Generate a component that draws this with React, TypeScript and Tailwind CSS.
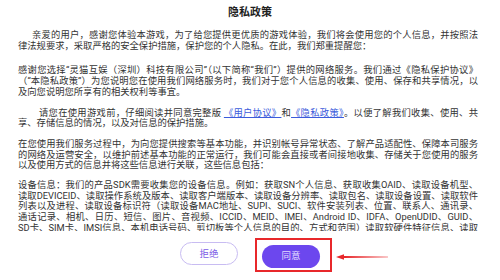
import React from "react";

const Line = ({ children, last, indent }: { children: React.ReactNode; last?: boolean; indent?: string }) => (
  <span
    className={`block ${indent ?? ""} ${last ? "text-left" : "text-justify [text-align-last:justify]"}`}
  >
    {children}
  </span>
);

const Link = ({ children }: { children: React.ReactNode }) => (
  <span className="text-[#3b5bdb] underline underline-offset-[1px]">{children}</span>
);

const App = () => {
  return (
    <div className="w-[500px] h-[280px] bg-white flex flex-col font-[Roboto,'Noto_Sans_CJK_SC',sans-serif] overflow-hidden">
      <h1 className="pt-[6px] text-center text-[11px] leading-[14px] font-bold text-[#1f1f1f]">隐私政策</h1>

      <div className="flex-1 overflow-hidden pl-[18px] pr-[22px] pt-[10px] text-[9.3px] leading-[10.7px] text-[#333]">
        <p>
          <Line indent="pl-[14px]">亲爱的用户，感谢您体验本游戏，为了给您提供更优质的游戏体验，我们将会使用您的个人信息，并按照法</Line>
          <Line last>律法规要求，采取严格的安全保护措施，保护您的个人隐私。在此，我们郑重提醒您：</Line>
        </p>

        <p className="mt-[14px]">
          <Line>感谢您选择“灵猫互娱（深圳）科技有限公司”（以下简称“我们”）提供的网络服务。我们通过《隐私保护协议》</Line>
          <Line>（“本隐私政策”）为您说明您在使用我们网络服务时，我们对于您个人信息的收集、使用、保存和共享情况，以</Line>
          <Line last>及向您说明您所享有的相关权利等事宜。</Line>
        </p>

        <p className="mt-[10px]">
          <Line indent="pl-[21px]">
            请您在使用游戏前，仔细阅读并同意完整版 <Link>《用户协议》</Link>和<Link>《隐私政策》</Link>。以便了解我们收集、使用、共
          </Line>
          <Line last>享、存储信息的情况，以及对信息的保护措施。</Line>
        </p>

        <p className="mt-[10px]">
          <Line>在您使用我们服务过程中，为向您提供搜索等基本功能，并识别帐号异常状态、了解产品适配性、保障本司服务</Line>
          <Line>的网络及运营安全，以维护前述基本功能的正常运行，我们可能会直接或者间接地收集、存储关于您使用的服务</Line>
          <Line last>以及使用方式的信息并将这些信息进行关联，这些信息包括：</Line>
        </p>

        <p className="mt-[9px]">
          <Line>设备信息：我们的产品SDK需要收集您的设备信息。例如：获取SN个人信息、获取收集OAID、读取设备机型、</Line>
          <Line>读取DEVICEID、读取操作系统及版本、读取客户端版本、读取设备分辨率、读取包名、读取设备设置、读取软件</Line>
          <Line>列表以及进程、读取设备标识符（读取设备MAC地址、SUPI、SUCI、软件安装列表、位置、联系人、通讯录、</Line>
          <Line>通话记录、相机、日历、短信、图片、音视频、ICCID、MEID、IMEI、Android ID、IDFA、OpenUDID、GUID、</Line>
          <Line>SD卡、SIM卡、IMSI信息、本机电话号码、剪切板等个人信息的目的、方式和范围）读取软硬件特征信息、读取</Line>
        </p>
      </div>

      <div className="flex justify-center gap-[24px] pt-[11px] pb-[12px]">
        <button className="w-[58px] h-[23px] rounded-full border border-[#c8bcf2] text-[9.5px] text-[#7b5ce6]">
          拒绝
        </button>
        <div className="relative">
          <button className="w-[58px] h-[23px] rounded-full bg-[#6c47ee] text-[9.5px] text-[#e2dbff]">同意</button>
          <span className="absolute left-[-7px] right-[-12px] top-[-4px] bottom-[-4px] border-2 border-[#e8282b]" />
          <svg className="absolute left-[74px] top-[10px] w-[54px] h-[10px]" viewBox="0 0 54 10">
            <polygon points="0,5 8,2.3 8,4.1 52,4.7 52,5.3 8,5.9 8,7.7" fill="#e8282b" />
          </svg>
        </div>
      </div>
    </div>
  );
};

export default App;
